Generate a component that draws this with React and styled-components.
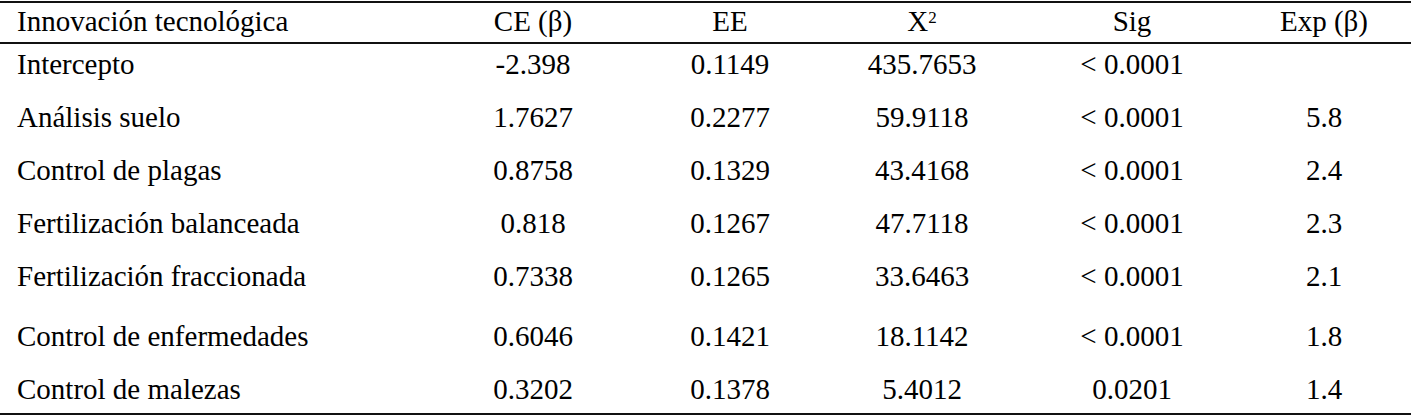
import React from "react";
import styled, { createGlobalStyle } from "styled-components";

const Global = createGlobalStyle`
  html, body { margin: 0; padding: 0; background: #fff; }
  body { font-family: "Liberation Serif", "Times New Roman", serif; color: #000; }
`;

const Table = styled.div`
  width: 1411px;
  margin-top: 1px;
  border-top: 2px solid #111;
  border-bottom: 2px solid #111;
  font-size: 29px;
`;

const COLS = "436px 194px 200px 184px 236px 148px";

const HeaderRow = styled.div`
  display: grid;
  grid-template-columns: ${COLS};
  padding-right: 13px;
  height: 39px;
  line-height: 36px;
  border-bottom: 2px solid #111;
`;

const Row = styled.div`
  display: grid;
  grid-template-columns: ${COLS};
  padding-right: 13px;
  height: ${(p) => p.$h}px;
  line-height: 40px;
`;

const Cell = styled.div`
  white-space: nowrap;
  text-align: ${(p) => (p.$first ? "left" : "center")};
  padding-left: ${(p) => (p.$first ? "17px" : "0")};
`;

const Sup = styled.sup`
  font-size: 17px;
  vertical-align: top;
  line-height: 1;
  position: relative;
  top: 6px;
`;

const rows = [
  ["Intercepto", "-2.398", "0.1149", "435.7653", "< 0.0001", "", 53],
  ["Análisis suelo", "1.7627", "0.2277", "59.9118", "< 0.0001", "5.8", 53],
  ["Control de plagas", "0.8758", "0.1329", "43.4168", "< 0.0001", "2.4", 53],
  ["Fertilización balanceada", "0.818", "0.1267", "47.7118", "< 0.0001", "2.3", 53],
  ["Fertilización fraccionada", "0.7338", "0.1265", "33.6463", "< 0.0001", "2.1", 60],
  ["Control de enfermedades", "0.6046", "0.1421", "18.1142", "< 0.0001", "1.8", 53],
  ["Control de malezas", "0.3202", "0.1378", "5.4012", "0.0201", "1.4", 44],
];

export default function App() {
  return (
    <>
      <Global />
      <Table>
        <HeaderRow>
          <Cell $first>Innovación tecnológica</Cell>
          <Cell>CE (β)</Cell>
          <Cell>EE</Cell>
          <Cell>
            X<Sup>2</Sup>
          </Cell>
          <Cell>Sig</Cell>
          <Cell>Exp (β)</Cell>
        </HeaderRow>
        {rows.map((r) => (
          <Row key={r[0]} $h={r[6]}>
            <Cell $first>{r[0]}</Cell>
            <Cell>{r[1]}</Cell>
            <Cell>{r[2]}</Cell>
            <Cell>{r[3]}</Cell>
            <Cell>{r[4]}</Cell>
            <Cell>{r[5]}</Cell>
          </Row>
        ))}
      </Table>
    </>
  );
}
